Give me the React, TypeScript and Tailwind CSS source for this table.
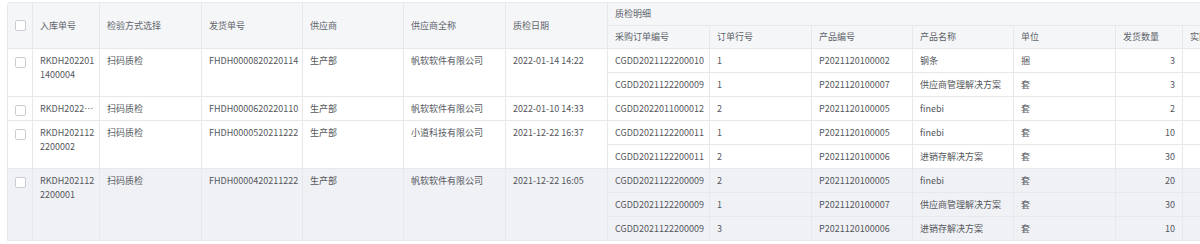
const groups = [
  {
    id: "RKDH2022011400004",
    method: "扫码质检",
    ship: "FHDH0000820220114",
    supplier: "生产部",
    fullName: "帆软软件有限公司",
    date: "2022-01-14 14:22",
    items: [
      { po: "CGDD2021122200010", line: "1", code: "P2021120100002", name: "钢条", unit: "捆", qty: 3, real: 3 },
      { po: "CGDD2021122200009", line: "1", code: "P2021120100007", name: "供应商管理解决方案", unit: "套", qty: 3, real: 3 },
    ],
  },
  {
    id: "RKDH2022011000003",
    method: "扫码质检",
    ship: "FHDH0000620220110",
    supplier: "生产部",
    fullName: "帆软软件有限公司",
    date: "2022-01-10 14:33",
    items: [
      { po: "CGDD2022011000012", line: "2", code: "P2021120100005", name: "finebi", unit: "套", qty: 2, real: 2 },
    ],
  },
  {
    id: "RKDH2021122200002",
    method: "扫码质检",
    ship: "FHDH0000520211222",
    supplier: "生产部",
    fullName: "小道科技有限公司",
    date: "2021-12-22 16:37",
    items: [
      { po: "CGDD2021122200011", line: "1", code: "P2021120100005", name: "finebi", unit: "套", qty: 10, real: 10 },
      { po: "CGDD2021122200011", line: "2", code: "P2021120100006", name: "进销存解决方案", unit: "套", qty: 30, real: 30 },
    ],
  },
  {
    id: "RKDH2021122200001",
    method: "扫码质检",
    ship: "FHDH0000420211222",
    supplier: "生产部",
    fullName: "帆软软件有限公司",
    date: "2021-12-22 16:05",
    active: true,
    items: [
      { po: "CGDD2021122200009", line: "2", code: "P2021120100005", name: "finebi", unit: "套", qty: 20, real: 20 },
      { po: "CGDD2021122200009", line: "1", code: "P2021120100007", name: "供应商管理解决方案", unit: "套", qty: 30, real: 30 },
      { po: "CGDD2021122200009", line: "3", code: "P2021120100006", name: "进销存解决方案", unit: "套", qty: 10, real: 10 },
    ],
  },
];

const widths = [25, 67, 102, 101, 101, 102, 102, 102, 102, 101, 101, 102, 67, 102];

const Checkbox = () => (
  <span className="block mx-auto w-[11px] h-[11px] rounded-[2px] border border-[#c9ccd3] bg-white" />
);

const th = "border-r border-b border-[#e6e8ec] px-[7px] text-left font-normal text-[#60646b] leading-[14px]";
const td = "border-r border-b border-[#e6e8ec] px-[7px] pt-[5px] pb-[4px] align-top leading-[14px]";

export default function App() {
  return (
    <div className="w-[1200px] h-[244px] bg-white pl-[7px] pt-[2px] overflow-hidden">
      <div className="w-[1277px] rounded-tl-[4px] border-t border-l border-[#e6e8ec] overflow-hidden">
        <table
          className="table-fixed border-separate border-spacing-0 w-[1276px] text-[9px] text-[#54575d]"
          style={{ fontFamily: '"Noto Sans CJK SC", "Noto Sans", sans-serif' }}
        >
          <colgroup>
            {widths.map((w, i) => (
              <col key={i} style={{ width: w }} />
            ))}
          </colgroup>
          <thead className="bg-[#f5f6f8]">
            <tr className="h-[23px]">
              <th rowSpan={2} className={`${th} px-0 align-middle`}>
                <Checkbox />
              </th>
              <th rowSpan={2} className={`${th} align-middle`}>入库单号</th>
              <th rowSpan={2} className={`${th} align-middle`}>检验方式选择</th>
              <th rowSpan={2} className={`${th} align-middle`}>发货单号</th>
              <th rowSpan={2} className={`${th} align-middle`}>供应商</th>
              <th rowSpan={2} className={`${th} align-middle`}>供应商全称</th>
              <th rowSpan={2} className={`${th} align-middle`}>质检日期</th>
              <th colSpan={7} className={`${th} align-middle`}>质检明细</th>
            </tr>
            <tr className="h-[23px]">
              {["采购订单编号", "订单行号", "产品编号", "产品名称", "单位", "发货数量", "实际数量"].map((h) => (
                <th key={h} className={`${th} align-middle`}>{h}</th>
              ))}
            </tr>
          </thead>
          <tbody>
            {groups.map((g) => {
              const bg = g.active ? "bg-[#f0f1f5]" : "bg-white";
              const span = g.items.length;
              const single = span === 1;
              return g.items.map((it, i) => (
                <tr key={`${g.id}-${i}`} className={bg}>
                  {i === 0 && (
                    <>
                      <td rowSpan={span} className={`${td} px-0`}>
                        <div className="pt-[3px]">
                          <Checkbox />
                        </div>
                      </td>
                      <td rowSpan={span} className={`${td} pr-[3px] ${single ? "truncate" : "break-all"}`}>{g.id}</td>
                      <td rowSpan={span} className={td}>{g.method}</td>
                      <td rowSpan={span} className={td}>{g.ship}</td>
                      <td rowSpan={span} className={td}>{g.supplier}</td>
                      <td rowSpan={span} className={td}>{g.fullName}</td>
                      <td rowSpan={span} className={td}>{g.date}</td>
                    </>
                  )}
                  <td className={td}>{it.po}</td>
                  <td className={td}>{it.line}</td>
                  <td className={td}>{it.code}</td>
                  <td className={td}>{it.name}</td>
                  <td className={td}>{it.unit}</td>
                  <td className={`${td} text-right`}>{it.qty}</td>
                  <td className={`${td} text-right`}>{it.real}</td>
                </tr>
              ));
            })}
          </tbody>
        </table>
      </div>
    </div>
  );
}
